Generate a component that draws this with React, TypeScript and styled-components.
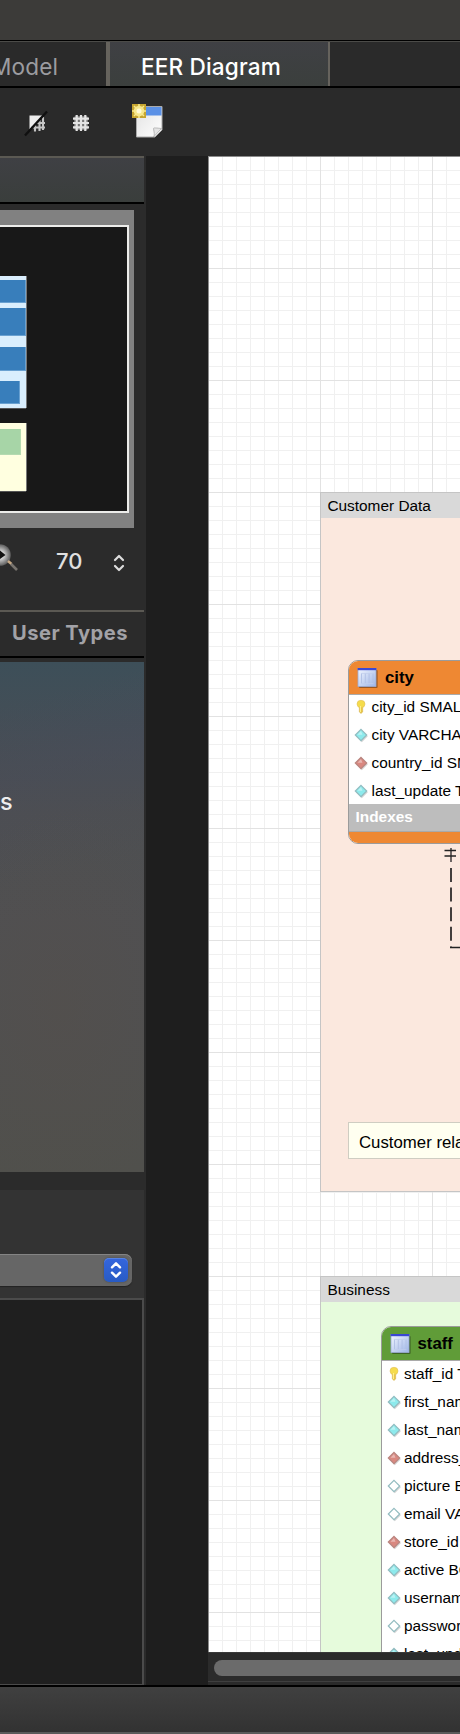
import React from 'react';
import styled, { createGlobalStyle } from 'styled-components';

const GlobalStyle = createGlobalStyle`
  * { box-sizing: border-box; }
  body { margin: 0; background: #2b2b2b; overflow: hidden; }
`;

const Window = styled.div`
  width: 460px;
  height: 1734px;
  display: flex;
  flex-direction: column;
  overflow: hidden;
  background: #2a2a2a;
  font-family: Inter, "Liberation Sans", sans-serif;
`;

const TitleBar = styled.div`
  flex: none;
  height: 41px;
  background: #3c3b39;
  border-bottom: 1px solid #000;
`;

const TabBar = styled.div`
  flex: none;
  height: 47px;
  display: flex;
  background: #2a2a2a;
  border-top: 1px solid #4b4b48;
  border-bottom: 2px solid #000;
`;

const Tab = styled.div<{ $active?: boolean }>`
  width: ${p => (p.$active ? 224 : 106)}px;
  flex: none;
  display: flex;
  align-items: center;
  justify-content: ${p => (p.$active ? 'flex-start' : 'flex-end')};
  padding: ${p => (p.$active ? '6px 0 0 31px' : '6px 48px 0 0')};
  font-size: 22.6px;
  letter-spacing: ${p => (p.$active ? 0.15 : 0.1)}px;
  line-height: 30px;
  white-space: nowrap;
  font-weight: ${p => (p.$active ? 500 : 400)};
  color: ${p => (p.$active ? '#fff' : '#9c9ca0')};
  background: ${p => (p.$active ? 'linear-gradient(#3f4044, #3b3f3d)' : 'transparent')};
  border-left: ${p => (p.$active ? '4px solid #66635d' : 'none')};
  border-right: ${p => (p.$active ? '2px solid #66635d' : 'none')};
`;

const Toolbar = styled.div`
  flex: none;
  height: 68px;
  display: flex;
  align-items: flex-start;
  padding: 13px 0 0 22px;
`;

const ToolIcon = styled.svg<{ $gap?: number }>`
  flex: none;
  display: block;
  margin-right: ${p => p.$gap ?? 0}px;
`;

const Workspace = styled.div`
  flex: none;
  height: 1529px;
  display: flex;
`;

const Sidebar = styled.div`
  width: 146px;
  flex: none;
  padding-right: 2px;
  background: #2b2b2b;
  display: flex;
  flex-direction: column;
`;

const PanelHeader = styled.div`
  height: 48px;
  flex: none;
  border-top: 2px solid #5b5953;
  border-bottom: 2px solid #000;
  background: linear-gradient(#3f4044, #3a3e3c);
`;

const Navigator = styled.div`
  flex: none;
  width: 134px;
  height: 318px;
  margin-top: 6px;
  padding: 15px 5px 15px 0;
  background: #818181;
`;

const Viewport = styled.div`
  height: 288px;
  background: #181818;
  border: solid #ececea;
  border-width: 2px 2px 2px 0;
  padding-top: 49px;
`;

const MiniLayer = styled.div<{ $yellow?: boolean }>`
  width: 26px;
  height: ${p => (p.$yellow ? 68 : 132)}px;
  margin-bottom: 15px;
  background: ${p => (p.$yellow ? '#ffffe0' : '#d9eefd')};
  box-shadow: 1px 0 0 #777, 0 1px 0 #555;
  padding-top: ${p => (p.$yellow ? 6 : 4)}px;
`;

const MiniTable = styled.div<{ $w: number; $h: number; $gap: number; $green?: boolean }>`
  width: ${p => p.$w}px;
  height: ${p => p.$h}px;
  margin-bottom: ${p => p.$gap}px;
  background: ${p => (p.$green ? '#a7d5a7' : '#387ebb')};
  border: solid ${p => (p.$green ? '#b4dab0' : '#69a1d1')};
  border-width: 0 1px 1px 0;
`;

const ZoomRow = styled.div`
  height: 82px;
  flex: none;
  display: flex;
  align-items: flex-start;
`;

const ZoomValue = styled.div`
  width: 56px;
  margin: 19px 0 0 36px;
  font-size: 22px;
  line-height: 28px;
  font-weight: 500;
  color: #e0e0e0;
`;

const Stepper = styled.svg`
  flex: none;
  display: block;
  margin-top: 26px;
`;

const SideTabs = styled.div`
  height: 48px;
  flex: none;
  padding: 5px 16px 0 0;
  text-align: right;
  white-space: nowrap;
  border-top: 2px solid #5b5953;
  border-bottom: 2px solid #000;
  font-size: 20.1px;
  line-height: 32px;
  font-weight: 700;
  letter-spacing: 0.5px;
  color: #a2a2a7;
`;

const Catalog = styled.div`
  flex: none;
  height: 510px;
  margin: 4px 0 18px;
  padding-top: 125px;
  font-size: 23.5px;
  line-height: 30px;
  font-weight: 500;
  color: #eee;
  background: radial-gradient(ellipse 130px 200px at 60px 345px, rgba(86, 78, 72, .35), transparent),
    linear-gradient(165deg, transparent 8%, rgba(74, 74, 92, .3) 22%, transparent 42%),
    linear-gradient(#3d4f59 0, #454e56 70px, #4d4f51 150px, #505052 260px, #505050 380px, #50504c 100%);
`;

const Description = styled.div`
  height: 108px;
  flex: none;
  padding-top: 64px;
  background: #333;
`;

const Select = styled.div`
  width: 132px;
  height: 32px;
  display: flex;
  justify-content: flex-end;
  padding: 4px;
  border-radius: 0 7px 7px 0;
  background: #666;
  box-shadow: inset 0 1px 0 #848484, 0 1px 1px #222;
`;

const SelectButton = styled.div`
  width: 24px;
  height: 24px;
  border-radius: 5px;
  background: linear-gradient(#3566de, #285bc4);
  box-shadow: inset 0 1px 0 #5682e4, 0 0 2px #444;
`;

const Notes = styled.div`
  height: 388px;
  flex: none;
  border: solid #4b4b4b;
  border-width: 2px 2px 2px 0;
  background: #1f1f1f;
`;

const Gutter = styled.div`
  width: 62px;
  flex: none;
  background: #1e1e1e;
`;

const MainBody = styled.div`
  flex: 1;
  display: flex;
  min-width: 0;
`;

const DiagramPane = styled.div`
  flex: 1;
  min-width: 0;
  display: flex;
  flex-direction: column;
`;

const Canvas = styled.div`
  position: relative;
  height: 1496px;
  flex: none;
  overflow: hidden;
  border-top: 1px solid #8b8b8b;
  border-left: 1px solid #8b8b8b;
  font-family: "Liberation Sans", Arial, sans-serif;
  font-size: 15.4px;
  color: #000;
  background-color: #fff;
  background-image:
    linear-gradient(90deg, #e2e2e2 1px, transparent 1px),
    linear-gradient(#e2e2e2 1px, transparent 1px),
    linear-gradient(90deg, #f0f0f0 1px, transparent 1px),
    linear-gradient(#f0f0f0 1px, transparent 1px);
  background-size: 112px 112px, 112px 112px, 14px 14px, 14px 14px;
  background-position: 111px 0, 0 111px, 13px 0, 0 13px;
`;

const Layer = styled.div<{ $top: number; $h: number; $fill: string }>`
  position: absolute;
  left: 111px;
  top: ${p => p.$top}px;
  width: 360px;
  height: ${p => p.$h}px;
  background: ${p => p.$fill};
  border: 1px solid #c5c5c5;
`;

const LayerTitle = styled.div`
  height: 25px;
  padding-left: 6.4px;
  line-height: 25px;
  background: #d9d9d9;
`;

const Table = styled.div<{ $x: number; $y: number }>`
  position: absolute;
  left: ${p => p.$x}px;
  top: ${p => p.$y}px;
  width: 240px;
  border: 1px solid #9b9b9b;
  border-radius: 10px;
  overflow: hidden;
  background: #fff;
`;

const TableHeader = styled.div<{ $fill: string }>`
  height: 34px;
  display: flex;
  align-items: center;
  gap: 6px;
  padding-left: 8px;
  font-size: 16.8px;
  font-weight: 700;
  background: ${p => p.$fill};
  border-bottom: 1px solid #aaa;
`;

const ColumnList = styled.div<{ $lift?: number }>`
  margin-top: ${p => -(p.$lift ?? 0)}px;
`;

const ColumnRow = styled.div`
  height: 28px;
  display: flex;
  align-items: center;
  gap: 3.5px;
  padding: 0 0 3px 5px;
  white-space: nowrap;
`;

const IndexBar = styled.div`
  height: 28px;
  margin-top: -2px;
  padding-left: 6.5px;
  line-height: 26px;
  font-weight: 700;
  color: #fff;
  background: #bdbdbd;
  border-bottom: 1px solid #a9a9a9;
`;

const TableFooter = styled.div<{ $fill: string }>`
  height: 11px;
  background: ${p => p.$fill};
`;

const Note = styled.div`
  position: absolute;
  left: 139px;
  top: 965px;
  width: 300px;
  height: 37px;
  padding-left: 10px;
  line-height: 39px;
  font-size: 16.8px;
  background: #fffff0;
  border: 1px solid #cfcdc2;
`;

const Connector = styled.svg`
  position: absolute;
  left: 231px;
  top: 687px;
`;

const ScrollTrack = styled.div`
  height: 30px;
  flex: none;
  padding: 7px 0 0 6px;
  background: #2b2b2b;
  border-top: 1px solid #3a3a3a;
  border-bottom: 1px solid #3f3f3f;
`;

const ScrollThumb = styled.div`
  height: 16px;
  border-radius: 8px 0 0 8px;
  background: #6b6b6b;
`;

const StatusBar = styled.div`
  flex: 1;
  border-top: 2px solid #000;
  border-bottom: 2px solid #5a5a5a;
  background: linear-gradient(#404040, #323232);
`;

type Kind = 'key' | 'blue' | 'red' | 'empty';

const ColumnIcon = ({ kind }: { kind: Kind }) =>
  kind === 'key' ? (
    <svg width="14" height="18" viewBox="0 0 14 18">
      <path d="M5.3 8h3.4v6L7 15.500 5.300 14z" fill="#e8c545" stroke="#d1ae4e" strokeWidth=".5" />
      <ellipse cx="7" cy="6" rx="4" ry="3.700" fill="#f5dc4c" stroke="#e0c05a" strokeWidth=".6" />
      <path d="M6.500 8v6" stroke="#fff08a" strokeWidth="1" />
    </svg>
  ) : (
    <svg width="14" height="16" viewBox="0 0 14 16">
      <path d="M7.800 3.200l6 6-6 6-6-6z" fill="#aaa" opacity=".5" />
      <path
        d="M7 2.300l5.700 5.700L7 13.700 1.300 8z"
        fill={kind === 'blue' ? '#8deaec' : kind === 'red' ? '#d98880' : '#fff'}
        stroke={kind === 'red' ? '#b98781' : '#93bcc0'}
        strokeWidth="1.200"
      />
      {kind !== 'empty' && <path d="M7 4L3.500 7.700h5z" fill="#fff" opacity=".4" />}
    </svg>
  );

const TableIcon = () => (
  <svg width="22" height="22" viewBox="0 0 22 22">
    <defs>
      <linearGradient id="sheet" x1="0" y1="0" x2="1" y2="1">
        <stop offset="0" stopColor="#f2f6ff" />
        <stop offset="1" stopColor="#9db5e6" />
      </linearGradient>
    </defs>
    <rect x="2" y="3" width="18.600" height="18" rx="1" fill="#000" opacity=".35" />
    <rect x="1" y="1.500" width="18" height="18" fill="url(#sheet)" stroke="#9aaad4" strokeWidth=".8" />
    <rect x=".6" y="1" width="18.800" height="2.200" fill="#3a48d2" />
    <path d="M4.500 6.500v10M8.300 6.500v10M12.100 6.500v10M16 6.500v10" stroke="#b0c0e4" strokeWidth=".9" />
    <path d="M4 6.500h12.500M4 16.500h12.500" stroke="#c0cdec" strokeWidth=".7" />
  </svg>
);

const Chevrons = ({ color, stroke }: { color: string; stroke: number }) => (
  <svg width="24" height="24" viewBox="0 0 24 24" fill="none" stroke={color} strokeWidth={stroke} strokeLinecap="round" strokeLinejoin="round">
    <path d="M8 9.300L12 5.300l4 4M8 14.700l4 4 4-4" />
  </svg>
);

const cityColumns: [Kind, string][] = [
  ['key', 'city_id SMALLINT'],
  ['blue', 'city VARCHAR(50)'],
  ['red', 'country_id SMALLINT'],
  ['blue', 'last_update TIMESTAMP'],
];

const staffColumns: [Kind, string][] = [
  ['key', 'staff_id TINYINT'],
  ['blue', 'first_name VARCHAR(45)'],
  ['blue', 'last_name VARCHAR(45)'],
  ['red', 'address_id SMALLINT'],
  ['empty', 'picture BLOB'],
  ['empty', 'email VARCHAR(50)'],
  ['red', 'store_id TINYINT'],
  ['blue', 'active BOOLEAN'],
  ['blue', 'username VARCHAR(16)'],
  ['empty', 'password VARCHAR(40)'],
  ['blue', 'last_update TIMESTAMP'],
];

const Columns = ({ items, lift }: { items: [Kind, string][]; lift?: number }) => (
  <ColumnList $lift={lift}>
    {items.map(([kind, label]) => (
      <ColumnRow key={label}>
        <ColumnIcon kind={kind} />
        {label}
      </ColumnRow>
    ))}
  </ColumnList>
);

const ToolbarIcons = () => (
  <Toolbar>
    <ToolIcon width="30" height="44" viewBox="22 101 30 44" $gap={18}>
      <path d="M29.500 115.500H43L29.500 129.500z" fill="#ededed" />
      <path d="M35 125v6.500M39.500 120v11M43 117v13M31 127.500h14M36 123h9" stroke="#c4c4c4" strokeWidth="2.100" />
      <path d="M25 135.500l22-24" stroke="#101010" strokeWidth="2.400" />
    </ToolIcon>
    <ToolIcon width="22" height="44" viewBox="70 101 22 44" $gap={38}>
      <rect x="74" y="116" width="14" height="14" rx="2" fill="#777" />
      <path d="M76.700 115v16M81 115v16M85.300 115v16M73 118.700h16M73 123h16M73 127.300h16" stroke="#e4e4e4" strokeWidth="2.200" />
    </ToolIcon>
    <ToolIcon width="36" height="44" viewBox="130 101 36 44">
      <defs>
        <linearGradient id="paper" x1="0" y1="0" x2="1" y2="1">
          <stop offset="0" stopColor="#e2e2e2" />
          <stop offset="1" stopColor="#fff" />
        </linearGradient>
      </defs>
      <path d="M136.500 106.500h25.500v23.500l-7 7h-18.500z" fill="url(#paper)" stroke="#aaa" />
      <path d="M153.500 137c1.500-2 .5-5 0-8.500 0-1 3-.5 8 0z" fill="#e4e4e4" stroke="#aaa" strokeWidth=".8" />
      <path d="M137 107h24.500v8.500H137z" fill="#5b91e6" />
      <path d="M132 104h14v14h-14z" fill="#c6a530" />
      <circle cx="139" cy="111" r="5.300" fill="#f7e78c" />
      <path d="M139 104v14M132 111h14M134 106l10 10M144 106l-10 10" stroke="#f8e98e" strokeWidth="1.500" />
      <circle cx="139" cy="111" r="2.500" fill="#fffbd6" />
    </ToolIcon>
  </Toolbar>
);

export default function App() {
  return (
    <Window>
      <GlobalStyle />
      <TitleBar />
      <TabBar>
        <Tab>Model</Tab>
        <Tab $active>EER Diagram</Tab>
      </TabBar>
      <ToolbarIcons />
      <Workspace>
        <Sidebar>
          <PanelHeader />
          <Navigator>
            <Viewport>
              <MiniLayer>
                <MiniTable $w={26} $h={23} $gap={5} />
                <MiniTable $w={26} $h={28} $gap={11} />
                <MiniTable $w={26} $h={24} $gap={10} />
                <MiniTable $w={20} $h={23} $gap={0} />
              </MiniLayer>
              <MiniLayer $yellow>
                <MiniTable $w={21} $h={26} $gap={0} $green />
              </MiniLayer>
            </Viewport>
          </Navigator>
          <ZoomRow>
            <ToolIcon width="20" height="44" viewBox="0 528 20 44">
              <defs>
                <radialGradient id="lens">
                  <stop offset=".3" stopColor="#ddd" />
                  <stop offset="1" stopColor="#5c5c5c" />
                </radialGradient>
              </defs>
              <circle cx="0" cy="555" r="10.800" fill="url(#lens)" />
              <path d="M0 550.500l5.500 4.500-5.500 4z" fill="#111" />
              <path d="M8 561l3.500 3" stroke="#c6a884" strokeWidth="2.600" />
              <path d="M11 564l6 6" stroke="#77736e" strokeWidth="2.600" />
            </ToolIcon>
            <ZoomValue>70</ZoomValue>
            <Stepper width="14" height="18" viewBox="0 0 14 18" fill="none" stroke="#ddd" strokeWidth="2.200" strokeLinecap="round" strokeLinejoin="round">
              <path d="M3 6L7 2l4 4M3 12l4 4 4-4" />
            </Stepper>
          </ZoomRow>
          <SideTabs>User Types</SideTabs>
          <Catalog>s</Catalog>
          <Description>
            <Select>
              <SelectButton>
                <Chevrons color="#fff" stroke={2.4} />
              </SelectButton>
            </Select>
          </Description>
          <Notes />
        </Sidebar>
        <MainBody>
          <Gutter />
          <DiagramPane>
            <Canvas>
              <Layer $top={335} $h={700} $fill="#fbe8de">
                <LayerTitle>Customer Data</LayerTitle>
              </Layer>
              <Table $x={139} $y={503}>
                <TableHeader $fill="#ee8833">
                  <TableIcon />
                  city
                </TableHeader>
                <Columns items={cityColumns} lift={1} />
                <IndexBar>Indexes</IndexBar>
                <TableFooter $fill="#ee8833" />
              </Table>
              <Connector width="30" height="120" viewBox="440 844 30 120" stroke="#222" fill="none">
                <path d="M451 848v14M444.500 850.500H456M444.500 856H456M450 947.500h20" strokeWidth="1.300" />
                <path d="M451 868v80" strokeWidth="1.700" strokeDasharray="14 5.600" />
              </Connector>
              <Note>Customer related data</Note>
              <Layer $top={1119} $h={420} $fill="#e6fbdc">
                <LayerTitle>Business</LayerTitle>
              </Layer>
              <Table $x={171.5} $y={1169}>
                <TableHeader $fill="#609c38">
                  <TableIcon />
                  staff
                </TableHeader>
                <Columns items={staffColumns} />
              </Table>
            </Canvas>
            <ScrollTrack>
              <ScrollThumb />
            </ScrollTrack>
          </DiagramPane>
        </MainBody>
      </Workspace>
      <StatusBar />
    </Window>
  );
}
